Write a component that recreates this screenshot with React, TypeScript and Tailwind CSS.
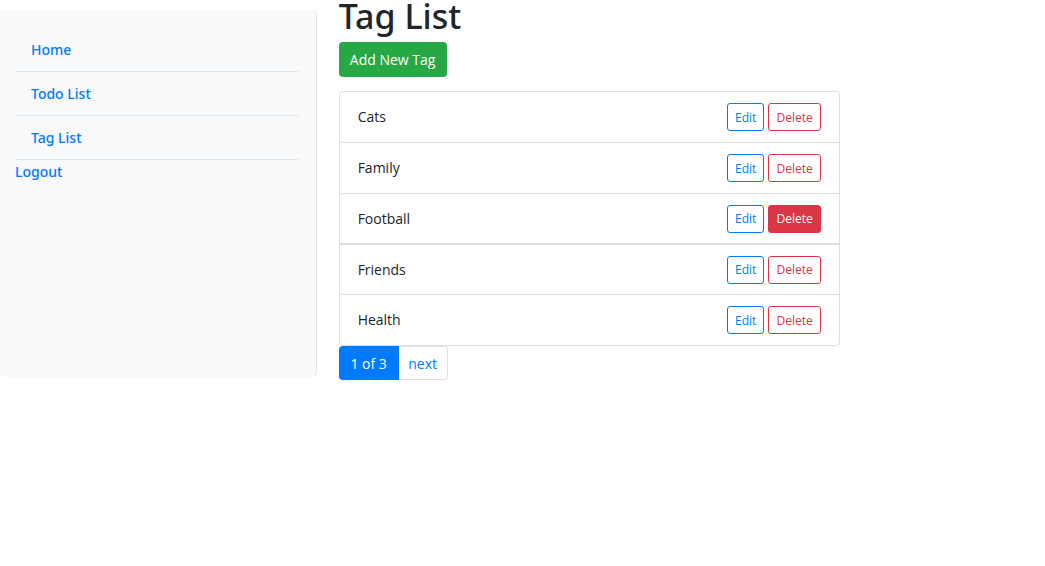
const tags = ["Cats", "Family", "Football", "Friends", "Health"];

const navLinks = ["Home", "Todo List", "Tag List"];

function TagRow({ name, active }: { name: string; active: boolean }) {
  return (
    <li
      className={
        active
          ? "flex h-[51px] items-center justify-between border-b-2 border-[#dfdfdf] px-[18px] [&+li]:h-[50px]"
          : "flex h-[51px] items-center justify-between border-b border-[#dfdfdf] px-[18px] last:h-[50px] last:border-b-0"
      }
    >
      <span>{name}</span>
      <span className="flex gap-1">
        <button
          type="button"
          aria-label={`Edit ${name}`}
          className="h-7 w-[37px] rounded-[3px] border border-[#007bff] pt-px text-xs text-[#007bff]"
        >
          Edit
        </button>
        <button
          type="button"
          aria-label={`Delete ${name}`}
          className={
            active
              ? "h-7 w-[53px] rounded-[3px] border border-[#dc3545] bg-[#dc3545] pt-px text-xs text-white"
              : "h-7 w-[53px] rounded-[3px] border border-[#dc3545] pt-px text-xs text-[#dc3545]"
          }
        >
          Delete
        </button>
      </span>
    </li>
  );
}

export default function App() {
  return (
    <div className="flex min-h-screen items-start bg-white font-['Open_Sans','Noto_Sans',sans-serif] text-sm text-[#212529]">
      <aside className="mt-[10px] min-h-[367px] w-[30.3%] shrink-0 rounded-[5px] border-r border-[#e0e3e6] bg-[#f8f9fa] pt-[18px] pr-[18px] pl-[15px]">
        <nav className="font-['Noto_Sans','Open_Sans',sans-serif] font-medium text-[#007bff]">
          <ul>
            {navLinks.map((label) => (
              <li key={label} className="flex h-11 items-center border-b border-[#e0e3e6] pl-4">
                <a href="#">{label}</a>
              </li>
            ))}
          </ul>
          <a href="#" className="block pt-[2px]">
            Logout
          </a>
        </nav>
      </aside>
      <main className="ml-[22px] w-[48%]">
        <h1 className="h-[42px] font-['Noto_Sans','Open_Sans',sans-serif] text-[34px] leading-[32px] font-medium">Tag List</h1>
        <button type="button" className="h-[35px] w-[108px] rounded-[4px] bg-[#28a745] pt-px font-medium text-white">
          Add New Tag
        </button>
        <ul className="mt-[14px] rounded-[4px] border border-[#dfdfdf]">
          {tags.map((name) => (
            <TagRow key={name} name={name} active={name === "Football"} />
          ))}
        </ul>
        <nav aria-label="Pages" className="flex">
          <span className="flex h-[34px] w-[60px] items-center justify-center rounded-l-[4px] bg-[#007bff] pt-px font-medium text-white">
            1 of 3
          </span>
          <a
            href="#"
            className="flex h-[34px] w-[49px] items-center justify-center rounded-r-[4px] border border-l-0 border-[#dee2e6] pt-px text-[#007bff]"
          >
            next
          </a>
        </nav>
      </main>
    </div>
  );
}
